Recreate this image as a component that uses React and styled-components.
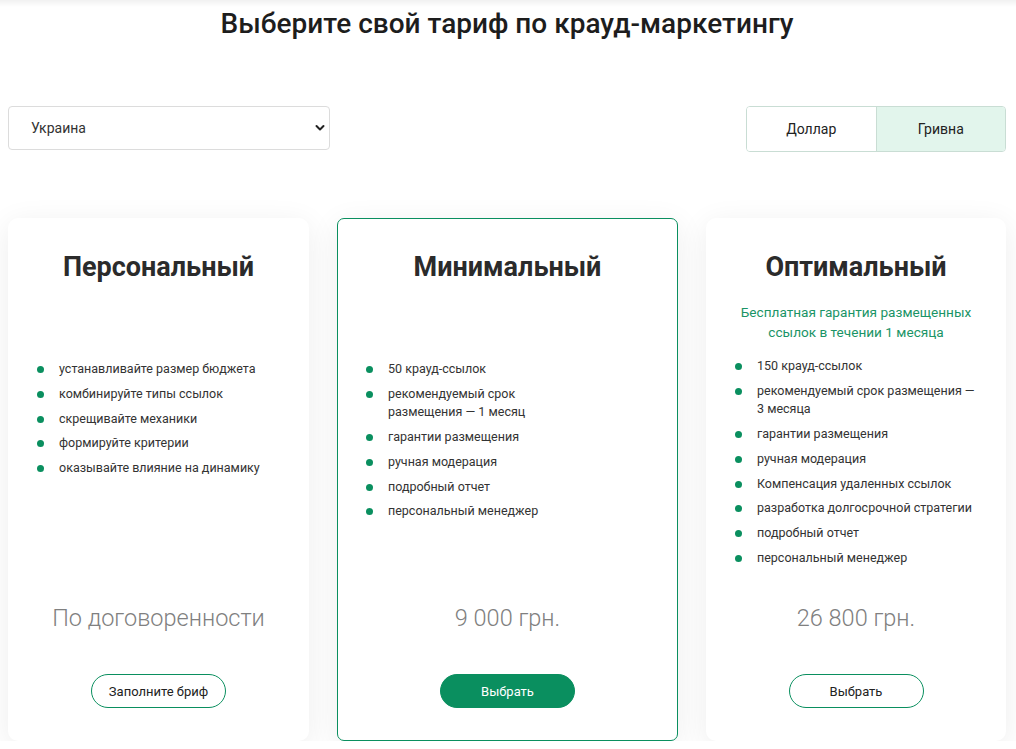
import React from "react";
import styled, { createGlobalStyle } from "styled-components";

const GREEN = "#0a8f5f";

const Global = createGlobalStyle`
  html, body { margin: 0; padding: 0; background: #fff; }
  body { font-family: Roboto, "Noto Sans", Arial, sans-serif; color: #222; }
  * { box-sizing: border-box; }
`;

const Page = styled.div`
  padding: 6px 10px 0 8px;
  background: linear-gradient(#f1f1f1, #fff 7px);
`;

const Title = styled.h1`
  margin: 0;
  text-align: center;
  font-size: 28px;
  line-height: 36px;
  font-weight: 500;
  color: #1d1d1d;
`;

const Controls = styled.div`
  margin-top: 64px;
  display: flex;
  justify-content: space-between;
  align-items: flex-start;
`;

const SelectWrap = styled.div`
  position: relative;
  width: 322px;
`;

const Select = styled.select`
  appearance: none;
  -webkit-appearance: none;
  width: 100%;
  height: 44px;
  border: 1px solid #dcdcdc;
  border-radius: 4px;
  background: #fff;
  padding: 0 22px;
  font-family: Roboto, Arial, sans-serif;
  font-size: 14px;
  color: #333;
  outline: none;
`;

const Chevron = styled.svg`
  position: absolute;
  right: 5px;
  top: 18px;
  pointer-events: none;
`;

const Toggle = styled.div`
  display: flex;
  width: 260px;
  height: 46px;
  border: 1px solid #c9ddd4;
  border-radius: 4px;
  overflow: hidden;
`;

const ToggleBtn = styled.button`
  flex: 1;
  border: none;
  border-left: ${(p) => (p.$first ? "none" : "1px solid #c9ddd4")};
  background: ${(p) => (p.$active ? "#e2f5ec" : "#fff")};
  font-family: Roboto, Arial, sans-serif;
  font-size: 14px;
  color: #222;
  cursor: pointer;
`;

const Cards = styled.div`
  margin-top: 66px;
  display: grid;
  grid-template-columns: 301px 341px 300px;
  column-gap: 28px;
`;

const Card = styled.div`
  display: flex;
  flex-direction: column;
  background: #fff;
  border-radius: ${(p) => (p.$featured ? "7px" : "10px")};
  border: ${(p) => (p.$featured ? `1px solid ${GREEN}` : "1px solid transparent")};
  box-shadow: 0 6px 30px rgba(0, 0, 0, 0.075);
  padding: 31px 22px 32px 28px;
  height: 523px;
`;

const Heading = styled.h2`
  margin: 0 3px 0 -3px;
  text-align: center;
  font-size: 27px;
  line-height: 34px;
  font-weight: 700;
  color: #2b2b2b;
`;

const Subtitle = styled.p`
  margin: 18px 3px 15px -3px;
  min-height: ${(p) => (p.$empty ? "43px" : "40px")};
  text-align: center;
  font-size: 13.6px;
  line-height: 20px;
  color: #1a9466;
`;

const List = styled.ul`
  list-style: none;
  margin: 0;
  padding: 0;
  max-width: ${(p) => p.$max || "none"};
`;

const Item = styled.li`
  position: relative;
  padding-left: 22px;
  font-size: 12.5px;
  line-height: 18.5px;
  color: #333;
  margin-bottom: 6.3px;
  &::before {
    content: "";
    position: absolute;
    left: 0;
    top: 6px;
    width: 7px;
    height: 7px;
    border-radius: 50%;
    background: ${GREEN};
  }
`;

const Price = styled.div`
  margin: auto 3px 0 -3px;
  text-align: center;
  font-size: 23.5px;
  line-height: 30px;
  font-weight: 300;
  color: #808080;
  transform: translateY(1px);
`;

const ButtonRow = styled.div`
  display: flex;
  justify-content: center;
  margin: 42px 3px 0 -3px;
`;

const Button = styled.button`
  width: 135px;
  height: 34px;
  border-radius: 17px;
  border: 1px solid ${GREEN};
  background: ${(p) => (p.$filled ? GREEN : "#fff")};
  color: ${(p) => (p.$filled ? "#fff" : "#222")};
  font-family: Roboto, Arial, sans-serif;
  font-size: 13px;
  cursor: pointer;
`;

const plans = [
  {
    name: "Персональный",
    items: [
      "устанавливайте размер бюджета",
      "комбинируйте типы ссылок",
      "скрещивайте механики",
      "формируйте критерии",
      "оказывайте влияние на динамику",
    ],
    price: "По договоренности",
    button: "Заполните бриф",
  },
  {
    name: "Минимальный",
    featured: true,
    listMax: "200px",
    items: [
      "50 крауд-ссылок",
      "рекомендуемый срок размещения — 1 месяц",
      "гарантии размещения",
      "ручная модерация",
      "подробный отчет",
      "персональный менеджер",
    ],
    price: "9 000 грн.",
    button: "Выбрать",
  },
  {
    name: "Оптимальный",
    subtitle: "Бесплатная гарантия размещенных ссылок в течении 1 месяца",
    items: [
      "150 крауд-ссылок",
      "рекомендуемый срок размещения — 3 месяца",
      "гарантии размещения",
      "ручная модерация",
      "Компенсация удаленных ссылок",
      "разработка долгосрочной стратегии",
      "подробный отчет",
      "персональный менеджер",
    ],
    price: "26 800 грн.",
    button: "Выбрать",
  },
];

export default function App() {
  return (
    <Page>
      <Global />
      <Title>Выберите свой тариф по крауд-маркетингу</Title>
      <Controls>
        <SelectWrap>
          <Select defaultValue="ua">
            <option value="ua">Украина</option>
          </Select>
          <Chevron width="10" height="8" viewBox="0 0 10 8">
            <polyline points="1.5,2 5,5.5 8.5,2" fill="none" stroke="#222" strokeWidth="2" strokeLinecap="round" strokeLinejoin="round" />
          </Chevron>
        </SelectWrap>
        <Toggle>
          <ToggleBtn $first>Доллар</ToggleBtn>
          <ToggleBtn $active>Гривна</ToggleBtn>
        </Toggle>
      </Controls>
      <Cards>
        {plans.map((p) => (
          <Card key={p.name} $featured={p.featured}>
            <Heading>{p.name}</Heading>
            <Subtitle $empty={!p.subtitle}>{p.subtitle}</Subtitle>
            <List $max={p.listMax}>
              {p.items.map((it) => (
                <Item key={it}>{it}</Item>
              ))}
            </List>
            <Price>{p.price}</Price>
            <ButtonRow>
              <Button $filled={p.featured}>{p.button}</Button>
            </ButtonRow>
          </Card>
        ))}
      </Cards>
    </Page>
  );
}
